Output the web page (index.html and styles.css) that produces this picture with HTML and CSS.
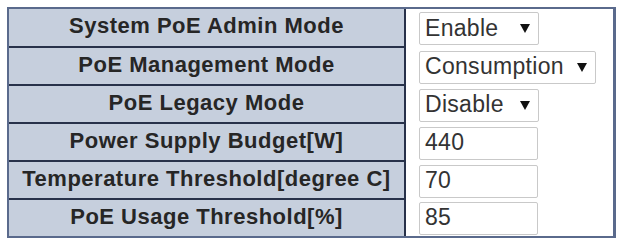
FILE: index.html
```html
<!DOCTYPE html>
<html>
<head>
<meta charset="utf-8">
<link rel="stylesheet" href="styles.css">
</head>
<body>
<div class="panel">
  <div class="label first">System PoE Admin Mode</div>
  <div class="value first">
    <div class="select w-short"><span>Enable</span><svg class="arrow" viewBox="0 0 10 9"><path d="M0 0H10L5 9Z"/></svg></div>
  </div>
  <div class="label">PoE Management Mode</div>
  <div class="value">
    <div class="select w-long"><span>Consumption</span><svg class="arrow" viewBox="0 0 10 9"><path d="M0 0H10L5 9Z"/></svg></div>
  </div>
  <div class="label">PoE Legacy Mode</div>
  <div class="value">
    <div class="select w-short"><span>Disable</span><svg class="arrow" viewBox="0 0 10 9"><path d="M0 0H10L5 9Z"/></svg></div>
  </div>
  <div class="label">Power Supply Budget[W]</div>
  <div class="value"><div class="input">440</div></div>
  <div class="label">Temperature Threshold[degree C]</div>
  <div class="value"><div class="input">70</div></div>
  <div class="label last">PoE Usage Threshold[%]</div>
  <div class="value last"><div class="input">85</div></div>
</div>
</body>
</html>
```
FILE: styles.css
```css
html, body {
  margin: 0;
  padding: 0;
  background: #ffffff;
}

.panel {
  margin: 7px 0 0 7px;
  width: 604px;
  border: 2px solid #5a6a8c;
  border-right-width: 3px;
  display: grid;
  grid-template-columns: 397px 1fr;
  grid-template-rows: 39px 38px 38px 38px 38px 36px;
  background: #ffffff;
  font-family: "Liberation Sans", Arial, sans-serif;
}

.label {
  background: #c6cfdd;
  border-bottom: 2px solid #28324a;
  border-right: 2px solid #28324a;
  display: flex;
  align-items: center;
  justify-content: center;
  font-weight: bold;
  font-size: 22px;
  letter-spacing: 0.5px;
  color: #262626;
  white-space: nowrap;
  overflow: visible;
  padding-bottom: 3px;
  box-sizing: border-box;
}

.label.last {
  border-bottom: none;
}

.value {
  display: flex;
  align-items: center;
  padding-left: 13px;
  box-sizing: border-box;
}

.select, .input {
  box-sizing: border-box;
  height: 33px;
  border: 1.5px solid #c9c9c9;
  border-radius: 2px;
  background: #ffffff;
  font-size: 23px;
  color: #333333;
  display: flex;
  align-items: center;
  padding-left: 5px;
  padding-bottom: 1px;
  letter-spacing: 0.3px;
}

.select {
  justify-content: space-between;
  padding-right: 8px;
}

.w-short { width: 120px; }
.w-long { width: 177px; }

.input {
  width: 119px;
}

.arrow {
  width: 10px;
  height: 9px;
  fill: #111111;
  margin-top: 1px;
}
```
